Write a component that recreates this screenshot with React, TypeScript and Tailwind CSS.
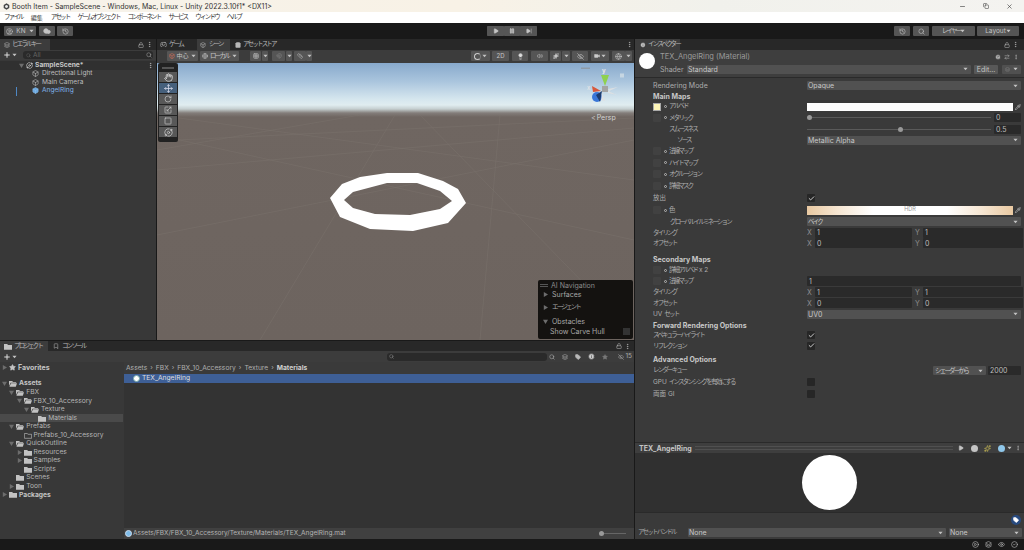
import React from "react";
import { Hand, Move, RotateCw, Scaling, Square, Orbit, Lock, EllipsisVertical, Search, History, Cloud, CircleUser, Star, Tag, Bookmark, EyeOff, Pipette, Check, Play, Pause, SkipForward, Plus, Video, Lightbulb, Volume2, Sparkles, Box, Gamepad2, Eye, Grid3x3, Globe, Minus, X, Copy, ArrowRightLeft, CircleHelp, CheckCircle2, Layers, Info, CirclePlay, Magnet, Ruler, ShoppingBag } from "lucide-react";

const J = ({ children }: { children: React.ReactNode }) => (
  <span className="text-[6.5px] tracking-[-1.8px] whitespace-nowrap">{children}</span>
);

const Caret = ({ className = "" }: { className?: string }) => (
  <svg viewBox="0 0 6 4" className={"w-[5px] h-[4px] shrink-0 " + className}><path d="M0.5 0.5h5L3 3.5z" fill="#c4c4c4" /></svg>
);

const Tri = ({ open }: { open?: boolean }) => (
  <svg viewBox="0 0 6 6" className="w-[5px] h-[5px] shrink-0">
    {open ? <path d="M0 1h6L3 6z" fill="#6d6d6d" /> : <path d="M1 0l5 3-5 3z" fill="#6d6d6d" />}
  </svg>
);

const Folder = ({ kind = "closed" }: { kind?: "closed" | "open" | "empty" }) => (
  <svg viewBox="0 0 10 8" className="w-[8px] h-[7px] shrink-0">
    {kind === "closed" && <path d="M0 1h4l1 1h5v6H0z" fill="#c2c2c2" />}
    {kind === "open" && <path d="M0 1h4l1 1h4v1H2L0 7zM2.5 3.8H10L8.5 8H0.5z" fill="#c2c2c2" />}
    {kind === "empty" && <path d="M.5 1.5h3.5l1 1h4.5v5H.5z" fill="none" stroke="#bdbdbd" strokeWidth=".8" />}
  </svg>
);

const Dd = ({ children, className = "" }: { children?: React.ReactNode; className?: string }) => (
  <div className={"flex items-center justify-between bg-[#515151] rounded-[1px] h-[9px] px-[1px] pr-[3px] text-[7px] text-[#c8c8c8] " + className}>
    <span className="whitespace-nowrap">{children}</span>
    <Caret />
  </div>
);

const Field = ({ children, className = "" }: { children?: React.ReactNode; className?: string }) => (
  <div className={"flex items-center bg-[#2a2a2a] rounded-[1px] h-[9px] px-[2px] text-[7px] text-[#bdbdbd] " + className}>{children}</div>
);

const TBtn = ({ children, className = "" }: { children?: React.ReactNode; className?: string }) => (
  <div className={"flex items-center justify-center bg-[#555555] rounded-[1px] h-[10px] text-[6px] text-[#c4c4c4] shrink-0 " + className}>{children}</div>
);

const Slot = () => <div className="w-[8px] h-[8px] bg-[#414141] rounded-[1px] shrink-0" />;
const Dot = () => <span className="block w-[3px] h-[3px] ml-[1px] rounded-full border-[0.7px] border-[#b5b5b5] shrink-0" />;

const Chk = ({ on }: { on?: boolean }) => (
  <div className="w-[8px] h-[8px] bg-[#262626] rounded-[1px] flex items-center justify-center shrink-0">
    {on && <Check size={7} strokeWidth={3} color="#e4e4e4" />}
  </div>
);

const SlotLabel = ({ label, extra = "" }: { label: React.ReactNode; extra?: string }) => (
  <div className={"flex items-center gap-[2px] " + extra}>
    <Slot />
    <Dot />
    <J>{label}</J>
  </div>
);

const Vec = ({ label, x, y }: { label: string; x: string; y: string }) => (
  <div className="flex items-center h-full pl-[18px] pr-[1px] text-[#ababab]">
    <span className="w-[154px] flex"><J>{label}</J></span>
    <span className="w-[8px] text-[#8e8e8e] text-[7px]">X</span>
    <Field className="w-[97px] h-[10px]">{x}</Field>
    <span className="w-[11px] text-center text-[#8e8e8e] text-[7px]">Y</span>
    <Field className="flex-1 h-[10px]">{y}</Field>
  </div>
);

const Section = ({ children, className }: { children: React.ReactNode; className: string }) => (
  <div className={"pl-[18px] flex items-center font-bold text-[7px] text-[#c8c8c8] " + className}>{children}</div>
);

const Label = ({ children, className }: { children: React.ReactNode; className: string }) => (
  <div className={"flex items-center pl-[18px] pr-[3px] text-[6.5px] text-[#adadad] " + className}>{children}</div>
);

const treeRows: { d: number; t: string; tri?: "o" | "c"; f: "closed" | "open" | "empty"; b?: boolean; sel?: boolean }[] = [
  { d: 0, t: "Assets", tri: "o", f: "open", b: true },
  { d: 1, t: "FBX", tri: "o", f: "open" },
  { d: 2, t: "FBX_10_Accessory", tri: "o", f: "open" },
  { d: 3, t: "Texture", tri: "o", f: "open" },
  { d: 4, t: "Materials", f: "closed", sel: true },
  { d: 1, t: "Prefabs", tri: "o", f: "open" },
  { d: 2, t: "Prefabs_10_Accessory", f: "empty" },
  { d: 1, t: "QuickOutline", tri: "o", f: "open" },
  { d: 2, t: "Resources", tri: "c", f: "closed" },
  { d: 2, t: "Samples", tri: "c", f: "closed" },
  { d: 2, t: "Scripts", f: "closed" },
  { d: 1, t: "Scenes", f: "closed" },
  { d: 1, t: "Toon", tri: "c", f: "closed" },
  { d: 0, t: "Packages", tri: "c", f: "closed", b: true },
];

const TreeRow = ({ r }: { r: (typeof treeRows)[number] }) => (
  <div className={"flex items-center h-[8.55px] gap-[2px] text-[6.7px] " + (r.sel ? "bg-[#4a4a4a] " : "") + (r.b ? "font-bold text-[#c4c4c4]" : "text-[#b4b4b4]")} style={{ paddingLeft: 2 + r.d * 7.3 }}>
    <span className="w-[5px] shrink-0 flex">{r.tri && <Tri open={r.tri === "o"} />}</span>
    <Folder kind={r.f} />
    <span className="whitespace-nowrap">{r.t}</span>
  </div>
);

const HierRow = ({ label, blue }: { label: string; blue?: boolean }) => (
  <div className={"flex items-center h-[8.5px] pl-[32px] gap-[3px] text-[6.6px] " + (blue ? "text-[#7fb2e8]" : "text-[#bdbdbd]")}>
    <Box size={7} color={blue ? "#8cc0ee" : "#bdbdbd"} fill={blue ? "#6aa7df" : "none"} />
    <span>{label}</span>
  </div>
);

const Tool = ({ children, active }: { children: React.ReactNode; active?: boolean }) => (
  <div className={"flex items-center justify-center h-[10px] mb-[1px] " + (active ? "bg-[#46607c]" : "bg-[#585858]")}>{children}</div>
);

export default function App() {
  return (
    <div className="w-[1024px] h-[550px] overflow-hidden flex flex-col bg-[#191919] font-['Inter','Noto_Sans_CJK_JP',sans-serif] leading-none select-none whitespace-nowrap">
      {/* title */}
      <div className="h-[12px] flex items-center pl-[3px] text-[7px] text-[#333] bg-[linear-gradient(90deg,#f6f2ea,#f8f2e6_45%,#f1f1ec_70%,#f4f3f0)]">
        <svg viewBox="0 0 10 10" className="w-[7px] h-[7px] mr-[2px]"><path d="M5 .5l4 2.2v4.6L5 9.5 1 7.3V2.7z" fill="#444" /><path d="M5 3l2 1.1v2L5 7.2 3 6.1v-2z" fill="#eee" /></svg>
        <span>Booth Item - SampleScene - Windows, Mac, Linux - Unity 2022.3.10f1* &lt;DX11&gt;</span>
        <div className="ml-auto flex items-center gap-[17px] pr-[11px] text-[#333]">
          <Minus size={7} />
          <Copy size={6} />
          <X size={7} />
        </div>
      </div>
      {/* menu */}
      <div className="h-[11px] bg-white flex items-center pl-[4px] gap-[8px] text-[#333] border-b-[1px] border-[#dcdcdc] box-content -mb-[1px]">
        <J>ファイル</J>
        <span className="text-[6px]">編集</span>
        {["アセット", "ゲームオブジェクト", "コンポーネント", "サービス", "ウィンドウ", "ヘルプ"].map((m) => (
          <J key={m}>{m}</J>
        ))}
      </div>
      {/* toolbar */}
      <div className="h-[16px] flex items-center pl-[4px] pr-[5px] bg-[#191919]">
        <TBtn className="w-[32px] gap-[3px] bg-[#3e3e3e]"><CircleUser size={7} /><span className="text-[6.5px]">KN</span><Caret /></TBtn>
        <TBtn className="w-[16px] ml-[3px] bg-[#3e3e3e]"><Cloud size={8} fill="#c4c4c4" /></TBtn>
        <TBtn className="w-[16px] ml-[2px] bg-[#3e3e3e]"><History size={7} /></TBtn>
        <div className="flex ml-[414px] bg-[#3e3e3e] rounded-[1px]">
          <TBtn className="w-[17px] bg-[#3e3e3e]"><Play size={6} fill="#c4c4c4" /></TBtn>
          <TBtn className="w-[16px] bg-[#4a4a4a]"><Pause size={6} fill="#c4c4c4" /></TBtn>
          <TBtn className="w-[17px] bg-[#3e3e3e]"><SkipForward size={6} fill="#c4c4c4" /></TBtn>
        </div>
        <TBtn className="w-[16px] ml-auto bg-[#3e3e3e]"><History size={7} /></TBtn>
        <TBtn className="w-[16px] ml-[3px] bg-[#3e3e3e]"><Search size={7} /></TBtn>
        <TBtn className="w-[43px] ml-[3px] bg-[#3e3e3e] justify-between px-[2px]"><J>レイヤー</J><Caret /></TBtn>
        <TBtn className="w-[42px] ml-[2px] bg-[#3e3e3e] justify-between px-[2px]"><span className="text-[6.5px]">Layout</span><Caret /></TBtn>
      </div>

      <div className="flex-1 flex min-h-0">
        {/* left column */}
        <div className="w-[634px] flex flex-col shrink-0">
          <div className="h-[301px] flex shrink-0">
            {/* hierarchy */}
            <div className="w-[156px] shrink-0 flex flex-col bg-[#383838]">
              <div className="h-[11px] flex items-center bg-[#282828] pr-[3px]">
                <div className="w-[50px] h-full bg-[#3c3c3c] flex items-center pl-[4px] gap-[2px] text-[#b8b8b8]">
                  <Layers size={6} /><J>ヒエラルキー</J>
                </div>
                <Lock size={6} color="#b8b8b8" className="ml-auto" />
                <EllipsisVertical size={7} color="#b8b8b8" className="ml-[2px]" />
              </div>
              <div className="h-[10px] flex items-center bg-[#3c3c3c] pl-[3px] pr-[3px] gap-[1px]">
                <Plus size={8} color="#ddd" strokeWidth={3} />
                <Caret className="mr-[5px]" />
                <div className="flex-1 h-[8px] bg-[#2a2a2a] rounded-[3px] flex items-center pl-[3px] gap-[2px] text-[6.5px] text-[#666]">
                  <Search size={5} /><span>All</span>
                  <Search size={6} color="#aaa" className="ml-auto mr-[1px]" />
                </div>
              </div>
              <div className="flex items-center h-[8.5px] mt-[1px] bg-[#303030] pl-[19px] pr-[2px] gap-[2px] text-[6.7px] font-bold text-[#c8c8c8]">
                <Tri open />
                <Orbit size={7} color="#ddd" />
                <span>SampleScene*</span>
                <EllipsisVertical size={7} color="#c0c0c0" className="ml-auto" />
              </div>
              <HierRow label="Directional Light" />
              <HierRow label="Main Camera" />
              <div className="relative">
                <HierRow label="AngelRing" blue />
                <div className="absolute left-[16px] top-0 w-[1px] h-[9px] bg-[#4e87c4]" />
              </div>
            </div>
            {/* scene */}
            <div className="ml-[1px] flex-1 min-w-0 flex flex-col">
              <div className="h-[11px] flex items-center bg-[#282828] pr-[1px] text-[#b8b8b8]">
                <div className="w-[37px] pl-[3px] h-full flex items-center gap-[2px]"><Gamepad2 size={7} /><J>ゲーム</J></div>
                <div className="w-[33px] ml-[3px] pl-[3px] h-full bg-[#3c3c3c] flex items-center gap-[3px]"><Box size={6} /><J>シーン</J></div>
                <div className="ml-[5px] flex items-center gap-[2px]"><ShoppingBag size={6} fill="#b8b8b8" /><J>アセットストア</J></div>
                <EllipsisVertical size={7} className="ml-auto" />
              </div>
              <div className="h-[13px] flex items-center bg-[#3c3c3c] pl-[10px] pr-[2px] pb-[1px]">
                <TBtn className="w-[31px] gap-[1px]"><Box size={6} color="#e0705a" /><span>中心</span><Caret className="ml-[1px]" /></TBtn>
                <TBtn className="w-[39px] ml-[2px] gap-[2px]"><Globe size={6} /><J>ローカル</J><Caret className="ml-[1px]" /></TBtn>
                <TBtn className="w-[11px] ml-[11px] bg-[#46607c]"><Grid3x3 size={6} /></TBtn>
                <TBtn className="w-[6px] ml-[1px] bg-[#46607c]"><Caret /></TBtn>
                <TBtn className="w-[13px] ml-[4px] bg-[#444]"><Magnet size={6} color="#888" /></TBtn>
                <TBtn className="w-[6px] ml-[1px] bg-[#444]"><Caret /></TBtn>
                <TBtn className="w-[12px] ml-[2px]"><Ruler size={6} /></TBtn>
                <TBtn className="w-[6px]"><Caret /></TBtn>
                <TBtn className="w-[19px] ml-auto bg-[#4b4b4b] gap-[1px]"><span className="w-[7px] h-[7px] rounded-full border border-[#ccc] border-r-[#777]" /><Caret /></TBtn>
                <TBtn className="w-[17px] ml-[2px]">2D</TBtn>
                <TBtn className="w-[16px] ml-[3px] bg-[#46607c]"><Lightbulb size={7} fill="#ddd" /></TBtn>
                <TBtn className="w-[17px] ml-[3px]"><Volume2 size={6} /></TBtn>
                <TBtn className="w-[11px] ml-[2px] bg-[#46607c]"><Sparkles size={6} fill="#ddd" /></TBtn>
                <TBtn className="w-[8px] ml-[1px] bg-[#46607c]"><Caret /></TBtn>
                <TBtn className="w-[16px] ml-[2px] bg-[#46607c]"><EyeOff size={7} /></TBtn>
                <TBtn className="w-[18px] ml-[3px] gap-[1px]"><Video size={6} fill="#ccc" /><Caret /></TBtn>
                <TBtn className="w-[13px] ml-[3px] bg-[#46607c]"><Globe size={7} /></TBtn>
                <TBtn className="w-[7px] bg-[#46607c]"><Caret /></TBtn>
              </div>
              <div className="relative flex-1 overflow-hidden bg-[linear-gradient(180deg,#88a9cc_0px,#a9c4dd_18px,#d5e6ee_36px,#e0edf0_42px,#c5cfd0_46px,#837d7a_50px,#6f6661_54px,#6d645f_100%)]">
                <svg viewBox="157 63 477 277" className="absolute inset-0 w-full h-full">
                  <g stroke="#7b726c" strokeWidth=".5" fill="none">
                    <path d="M157 141L634 118M157 170L634 128M157 115L634 180M157 235L634 140M260 340L395 115M480 340L500 115M600 300L420 115M157 135L634 240M360 115L157 150" />
                  </g>
                  <path fillRule="evenodd" fill="#ffffff" d="M330 198L342 184L360 177L387 173L418 173L443 181L458 189L466 203L448 223L413 231L370 229L340 217ZM344 200L353 208L375 214L410 215L440 209L452 201L440 191L417 183L387 183L353 192Z" />
                  {/* gizmo */}
                  <path d="M581 67.500h9v1.500h-9z" fill="#8e9ba8" />
                  <path d="M620 73.500h4v4h-4z" fill="#c6d6e2" />
                  <path d="M605 86L601 75h8z" fill="#8fd14f" />
                  <path d="M601 91l-9-5 1 6z" fill="#d9583b" />
                  <circle cx="597" cy="97" r="5" fill="#3a76d8" />
                  <path d="M602 91l-6 4 4 7z" fill="#1d3b6e" />
                  <path d="M602 86h6v6h-6z" fill="#a4a4a4" />
                  <path d="M608 89l10-2-9 4zM608 91l9 4-9-2zM602 93l3 8-4-1z" fill="#e0e0e0" opacity=".85" />
                </svg>
                <span className="absolute left-[445px] top-[5px] text-[6px] font-bold text-[#e8e8e8]">y</span>
                <span className="absolute left-[430px] top-[22px] text-[6px] text-[#e8e8e8]">x</span>
                <span className="absolute left-[433px] top-[38px] text-[6px] text-[#e8e8e8]">z</span>
                <div className="absolute left-[434px] top-[51px] flex items-center text-[7px] text-[#d4d4d4]">
                  <span>&lt;</span><span className="ml-[1px]">Persp</span>
                </div>
                {/* tools */}
                <div className="absolute left-[1px] top-[0px] w-[20px] h-[79px] bg-[#222] rounded-[2px] px-[1px] flex flex-col">
                  <div className="h-[9px] flex items-center justify-center"><div className="w-[12px] h-[2px] bg-[#555]" /></div>
                  <Tool><Hand size={9} color="#e0e0e0" /></Tool>
                  <Tool active><Move size={9} color="#dde" /></Tool>
                  <Tool><RotateCw size={8} color="#ccc" /></Tool>
                  <Tool><Scaling size={8} color="#ccc" /></Tool>
                  <Tool><Square size={8} color="#ccc" /></Tool>
                  <Tool><Orbit size={9} color="#ccc" /></Tool>
                </div>
                {/* AI Nav */}
                <div className="absolute right-[1px] bottom-[1px] w-[95px] h-[59px] bg-[#141210] rounded-[2px] text-[7px] text-[#a8a8a8]">
                  <div className="h-[8px] mt-[1px] flex items-center pl-[2px] gap-[3px]">
                    <div className="w-[8px] h-[3px] border-y-[1px] border-[#555]" /><span className="text-[#8a8a8a]">AI Navigation</span>
                  </div>
                  <div className="h-[9px] mt-[0.5px] flex items-center pl-[5px] gap-[4px]"><Tri /><span>Surfaces</span></div>
                  <div className="h-[9px] mt-[4px] flex items-center pl-[5px] gap-[4px]"><Tri /><J>エージェント</J></div>
                  <div className="h-[9px] mt-[5px] flex items-center pl-[5px] gap-[4px]"><Tri open /><span>Obstacles</span></div>
                  <div className="h-[9px] mt-[1px] flex items-center pl-[12px] pr-[3px]"><span>Show Carve Hull</span><div className="ml-auto w-[7px] h-[7px] bg-[#333]" /></div>
                </div>
              </div>
            </div>
          </div>

          {/* project */}
          <div className="flex-1 mt-[1px] flex flex-col min-h-0 bg-[#383838]">
            <div className="h-[10px] shrink-0 flex items-center bg-[#282828] pr-[3px] text-[#b8b8b8]">
              <div className="w-[48px] h-full bg-[#3c3c3c] flex items-center pl-[4px] gap-[2px]"><Folder /><J>プロジェクト</J></div>
              <div className="ml-[5px] flex items-center gap-[3px]"><Bookmark size={6} /><J>コンソール</J></div>
              <Lock size={6} className="ml-auto" />
              <EllipsisVertical size={7} className="ml-[2px]" />
            </div>
            <div className="h-[11px] shrink-0 flex items-center bg-[#3c3c3c] pl-[3px] pr-[2px]">
              <Plus size={8} color="#ddd" strokeWidth={3} />
              <Caret className="ml-[1px]" />
              <div className="ml-[370px] w-[160px] h-[8px] bg-[#2a2a2a] rounded-[3px] flex items-center pl-[2px]"><Search size={5} color="#999" /></div>
              <div className="flex items-center gap-[7px] ml-[2px] text-[#b8b8b8]">
                <Search size={6} />
                <Layers size={6} />
                <Tag size={6} fill="#b8b8b8" />
                <Info size={7} fill="#ccc" color="#3c3c3c" />
                <Star size={6} color="#777" fill="#777" />
              </div>
              <div className="ml-auto flex items-center gap-[1px] text-[6.5px] text-[#a8a8a8]"><EyeOff size={6} /><span>15</span></div>
            </div>
            <div className="flex-1 flex min-h-0">
              <div className="w-[123px] shrink-0 pt-[1px]">
                <div className="flex items-center h-[8.55px] gap-[2px] pl-[2px] text-[7px] font-bold text-[#c4c4c4]">
                  <Tri /><Star size={7} fill="#c4c4c4" color="#c4c4c4" /><span>Favorites</span>
                </div>
                <div className="h-[8px]" />
                {treeRows.map((r) => <TreeRow key={r.t} r={r} />)}
              </div>
              <div className="ml-[1px] flex-1 flex flex-col bg-[#333333] min-w-0">
                <div className="h-[12px] shrink-0 flex items-center bg-[#3a3a3a] pl-[2px] gap-[3px] text-[6.7px] text-[#aeaeae]">
                  <span>Assets</span><span>›</span><span>FBX</span><span>›</span><span>FBX_10_Accessory</span><span>›</span><span>Texture</span><span>›</span><b className="text-[#cfcfcf]">Materials</b>
                </div>
                <div className="h-[9px] shrink-0 flex items-center bg-[#3e5f96] pl-[9px] gap-[2px] text-[6.7px] text-[#dedede]">
                  <span className="w-[7px] h-[7px] rounded-full bg-white border border-[#7aa]" /><span>TEX_AngelRing</span>
                </div>
                <div className="flex-1" />
                <div className="h-[11px] shrink-0 bg-[#404040] flex items-center pl-[1px] pr-[8px] gap-[1px] text-[6.5px] text-[#b4b4b4]">
                  <span className="w-[7px] h-[7px] rounded-full bg-[#7dbbe8] border border-[#cde]" />
                  <span>Assets/FBX/FBX_10_Accessory/Texture/Materials/TEX_AngelRing.mat</span>
                  <div className="ml-auto w-[27px] h-[1px] bg-[#666] relative">
                    <div className="absolute left-0 -top-[2px] w-[5px] h-[5px] rounded-full bg-[#999]" />
                  </div>
                </div>
              </div>
            </div>
          </div>
        </div>

        {/* inspector */}
        <div className="ml-[1px] flex-1 min-w-0 flex flex-col bg-[#3a3a3a]">
          <div className="h-[11px] shrink-0 flex items-center bg-[#282828] pr-[5px] text-[#b8b8b8]">
            <div className="w-[45px] h-full bg-[#3c3c3c] flex items-center pl-[5px] gap-[2px]"><Info size={6} fill="#ccc" color="#333" /><J>インスペクター</J></div>
            <Lock size={6} className="ml-auto" />
            <EllipsisVertical size={7} className="ml-[2px]" />
          </div>
          <div className="h-[28px] shrink-0 relative bg-[#3e3e3e] border-b border-[#2a2a2a] text-[7.5px] text-[#9a9a9a]">
            <div className="flex h-full">
              <div className="w-[16px] h-[16px] rounded-full bg-white mt-[3px] ml-[4px] shrink-0" />
              <div className="flex-1 flex flex-col pl-[5px] pr-[3px]">
                <div className="h-[12px] flex items-center pt-[2px] pr-[2px]">
                  <span>TEX_AngelRing (Material)</span>
                  <div className="ml-auto flex items-center gap-[3px] text-[#bbb]">
                    <CircleHelp size={6} fill="#bbb" color="#333" />
                    <ArrowRightLeft size={6} />
                    <EllipsisVertical size={6} />
                  </div>
                </div>
                <div className="h-[12px] flex items-center text-[7px] mt-[1px]">
                  <span className="w-[27px] text-[#a8a8a8]">Shader</span>
                  <Dd className="w-[284px] bg-[#4e4e4e]">Standard</Dd>
                  <div className="ml-[3px] w-[24px] h-[9px] bg-[#585858] rounded-[1px] flex items-center justify-center text-[#c4c4c4]">Edit...</div>
                  <div className="ml-[4px] flex-1 h-[9px] bg-[#505050] rounded-[1px] flex items-center justify-center gap-[3px]"><Layers size={5} color="#888" /><Caret /></div>
                </div>
              </div>
            </div>
          </div>

          <div className="flex-1 min-h-0 flex flex-col text-[6.5px] text-[#adadad]">
            <div className="h-[2px]" />
            <Label className="h-[11px]"><span className="w-[154px] text-[7px]">Rendering Mode</span><Dd className="flex-1">Opaque</Dd></Label>
            <Section className="h-[10px]">Main Maps</Section>
            <Label className="h-[11px]">
              <div className="w-[153px] flex items-center gap-[2px]"><div className="w-[8px] h-[8px] bg-[#fdf5b8] border-[0.5px] border-[#aaa]" /><Dot /><J>アルベド</J></div>
              <div className="flex-1 h-[8px] bg-white ml-[1px]" />
              <Pipette size={6} color="#ddd" className="ml-[2px]" />
            </Label>
            <Label className="h-[11.5px]">
              <SlotLabel label="メタリック" extra="w-[154px]" />
              <div className="flex-1 relative h-[1px] bg-[#5a5a5a]"><div className="absolute left-0 -top-[2px] w-[5px] h-[5px] rounded-full bg-[#999]" /></div>
              <Field className="w-[27px] ml-[3px]">0</Field>
            </Label>
            <Label className="h-[11px]">
              <span className="w-[154px] pl-[16px] flex"><J>スムースネス</J></span>
              <div className="flex-1 relative h-[1px] bg-[#5a5a5a]"><div className="absolute left-[91px] -top-[2px] w-[5px] h-[5px] rounded-full bg-[#999]" /></div>
              <Field className="w-[27px] ml-[3px]">0.5</Field>
            </Label>
            <Label className="h-[11px]"><span className="w-[154px] pl-[24px] flex"><J>ソース</J></span><Dd className="flex-1">Metallic Alpha</Dd></Label>
            <Label className="h-[11.5px]"><SlotLabel label="法線マップ" /></Label>
            <Label className="h-[11.5px]"><SlotLabel label="ハイトマップ" /></Label>
            <Label className="h-[11.5px]"><SlotLabel label="オクルージョン" /></Label>
            <Label className="h-[12px]"><SlotLabel label="詳細マスク" /></Label>
            <Label className="h-[12px]"><span className="w-[154px] text-[6.5px]">放出</span><Chk on /></Label>
            <Label className="h-[12px]">
              <SlotLabel label="色" extra="w-[154px]" />
              <div className="flex-1 h-[9px] bg-[linear-gradient(90deg,#e9c9a2,#f6e6d2_15%,#ffffff_32%,#ffffff_68%,#f6e6d2_85%,#e9c9a2)] flex items-center justify-center text-[5.5px] text-[#999]">HDR</div>
              <Pipette size={6} color="#ddd" className="ml-[2px]" />
            </Label>
            <Label className="h-[11.5px]"><span className="w-[154px] pl-[17px] flex"><J>グローバルイルミネーション</J></span><Dd className="flex-1"><J>ベイク</J></Dd></Label>
            <div className="h-[10.5px]"><Vec label="タイリング" x="1" y="1" /></div>
            <div className="h-[10px]"><Vec label="オフセット" x="0" y="0" /></div>
            <div className="h-[5.5px]" />
            <Section className="h-[11px]">Secondary Maps</Section>
            <Label className="h-[11px]"><SlotLabel label={<>詳細アルベド<span className="tracking-normal"> x 2</span></>} /></Label>
            <Label className="h-[11px]"><SlotLabel label="法線マップ" extra="w-[154px]" /><Field className="flex-1 h-[10px]">1</Field></Label>
            <div className="h-[11px]"><Vec label="タイリング" x="1" y="1" /></div>
            <div className="h-[11px]"><Vec label="オフセット" x="0" y="0" /></div>
            <Label className="h-[11.5px]"><span className="w-[154px] flex items-center gap-[2px]"><span>UV</span><J>セット</J></span><Dd className="flex-1">UV0</Dd></Label>
            <Section className="h-[10px]">Forward Rendering Options</Section>
            <Label className="h-[10.5px]"><span className="w-[154px] flex"><J>スペキュラーハイライト</J></span><Chk on /></Label>
            <Label className="h-[10.5px]"><span className="w-[154px] flex"><J>リフレクション</J></span><Chk on /></Label>
            <div className="h-[3.5px]" />
            <Section className="h-[10.5px]">Advanced Options</Section>
            <Label className="h-[11px]">
              <J>レンダーキュー</J>
              <Dd className="ml-auto w-[53px] bg-[#505050] px-[2px]"><J>シェーダーから</J></Dd>
              <Field className="w-[33px] ml-[2px]">2000</Field>
            </Label>
            <Label className="h-[12px]"><span className="w-[154px] flex items-center gap-[2px]"><span>GPU</span><J>インスタンシングを有効にする</J></span><Chk /></Label>
            <Label className="h-[12px]"><span className="w-[154px] flex items-center gap-[2px]"><span>両面</span><span>GI</span></span><Chk /></Label>
          </div>

          {/* preview */}
          <div className="h-[10px] shrink-0 flex items-center bg-[#3e3e3e] border-t border-[#2a2a2a] pl-[4px] pr-[2px] text-[7px] font-bold text-[#c4c4c4] box-content">
            <span>TEX_AngelRing</span>
            <div className="flex-1 h-[4px] mx-[3px] border-y-[1px] border-[#505050]" />
            <div className="flex items-center w-[66px] shrink-0 pl-[2px]">
              <Play size={6} fill="#c4c4c4" color="#c4c4c4" />
              <span className="w-[7px] h-[7px] rounded-full bg-[#c4c4c4] ml-[7px]" />
              <Sparkles size={7} color="#d8c85a" className="ml-[6px]" />
              <span className="w-[7px] h-[7px] rounded-full bg-[#8fc7ea] ml-[7px]" />
              <Caret className="ml-[2px]" />
              <EllipsisVertical size={6} color="#c4c4c4" className="ml-[3px]" />
            </div>
          </div>
          <div className="h-[60px] shrink-0 bg-[#303030] flex items-center justify-center border-b border-[#2a2a2a]">
            <div className="w-[55px] h-[55px] rounded-full bg-white" />
          </div>
          <div className="h-[13px] shrink-0 bg-[#3a3a3a] flex items-center justify-end pr-[3px]">
            <div className="w-[10px] h-[10px] rounded-full bg-[#274a80] flex items-center justify-center"><Tag size={6} color="#fff" fill="#fff" /></div>
          </div>
          <div className="h-[13px] shrink-0 bg-[#3a3a3a] flex items-center pl-[3px] pr-[2px] text-[6.5px] text-[#a8a8a8]">
            <span className="w-[50px] shrink-0 flex"><J>アセットバンドル</J></span>
            <Dd className="w-[258px]">None</Dd>
            <Dd className="flex-1 ml-[3px]">None</Dd>
          </div>
        </div>
      </div>

      {/* status */}
      <div className="h-[11px] shrink-0 bg-[#191919] flex items-center justify-end gap-[6px] pr-[6px] text-[#c0c0c0]">
        <CirclePlay size={7} />
        <Layers size={7} />
        <Eye size={7} />
        <CheckCircle2 size={7} />
      </div>
    </div>
  );
}
